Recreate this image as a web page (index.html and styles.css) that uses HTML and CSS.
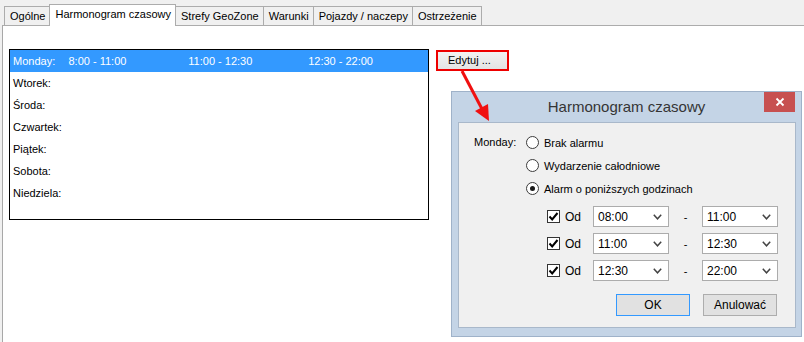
FILE: index.html
```html
<!DOCTYPE html>
<html>
<head lang="pl">
    <meta charset="UTF-8">
    <title>Harmonogram czasowy</title>
    <link rel="stylesheet" href="styles.css">
</head>
<body>

<div class="tabs">
    <div class="tab">Ogólne</div>
    <div class="tab tab-active">Harmonogram czasowy</div>
    <div class="tab">Strefy GeoZone</div>
    <div class="tab">Warunki</div>
    <div class="tab">Pojazdy / naczepy</div>
    <div class="tab">Ostrzeżenie</div>
</div>

<div class="panel">
    <div class="schedule">
        <div class="day day-selected">
            <span class="day-name">Monday:</span>
            <span class="slot">8:00 - 11:00</span>
            <span class="slot">11:00 - 12:30</span>
            <span class="slot">12:30 - 22:00</span>
        </div>
        <div class="day"><span class="day-name">Wtorek:</span></div>
        <div class="day"><span class="day-name">Środa:</span></div>
        <div class="day"><span class="day-name">Czwartek:</span></div>
        <div class="day"><span class="day-name">Piątek:</span></div>
        <div class="day"><span class="day-name">Sobota:</span></div>
        <div class="day"><span class="day-name">Niedziela:</span></div>
    </div>
    <div class="edit-btn">Edytuj ...</div>
</div>

<!-- okno dialogowe nad zakładką -->
<div class="dialog">
    <div class="dialog-title">
        Harmonogram czasowy
        <span class="dialog-close">
            <svg width="10" height="10" viewBox="0 0 10 10">
                <path d="M1.5 1.5 L8.5 8.5 M8.5 1.5 L1.5 8.5" stroke="#fff" stroke-width="1.8" fill="none"/>
            </svg>
        </span>
    </div>
    <div class="dialog-body">
        <div class="dialog-label">Monday:</div>
        <div class="dialog-options">
            <div class="radio-row"><span class="radio"></span>Brak alarmu</div>
            <div class="radio-row"><span class="radio"></span>Wydarzenie całodniowe</div>
            <div class="radio-row"><span class="radio radio-on"></span>Alarm o poniższych godzinach</div>

            <div class="time-row">
                <span class="check"><svg width="11" height="11" viewBox="0 0 11 11"><path d="M1.5 5.5 L4.2 8.5 L9.5 2" stroke="#000" stroke-width="2" fill="none"/></svg></span>
                <span class="od">Od</span>
                <div class="combo">08:00<svg width="9" height="6" viewBox="0 0 9 6"><path d="M0.8 0.8 L4.5 4.8 L8.2 0.8" stroke="#444" stroke-width="1.5" fill="none"/></svg></div>
                <span class="dash">-</span>
                <div class="combo">11:00<svg width="9" height="6" viewBox="0 0 9 6"><path d="M0.8 0.8 L4.5 4.8 L8.2 0.8" stroke="#444" stroke-width="1.5" fill="none"/></svg></div>
            </div>
            <div class="time-row">
                <span class="check"><svg width="11" height="11" viewBox="0 0 11 11"><path d="M1.5 5.5 L4.2 8.5 L9.5 2" stroke="#000" stroke-width="2" fill="none"/></svg></span>
                <span class="od">Od</span>
                <div class="combo">11:00<svg width="9" height="6" viewBox="0 0 9 6"><path d="M0.8 0.8 L4.5 4.8 L8.2 0.8" stroke="#444" stroke-width="1.5" fill="none"/></svg></div>
                <span class="dash">-</span>
                <div class="combo">12:30<svg width="9" height="6" viewBox="0 0 9 6"><path d="M0.8 0.8 L4.5 4.8 L8.2 0.8" stroke="#444" stroke-width="1.5" fill="none"/></svg></div>
            </div>
            <div class="time-row">
                <span class="check"><svg width="11" height="11" viewBox="0 0 11 11"><path d="M1.5 5.5 L4.2 8.5 L9.5 2" stroke="#000" stroke-width="2" fill="none"/></svg></span>
                <span class="od">Od</span>
                <div class="combo">12:30<svg width="9" height="6" viewBox="0 0 9 6"><path d="M0.8 0.8 L4.5 4.8 L8.2 0.8" stroke="#444" stroke-width="1.5" fill="none"/></svg></div>
                <span class="dash">-</span>
                <div class="combo">22:00<svg width="9" height="6" viewBox="0 0 9 6"><path d="M0.8 0.8 L4.5 4.8 L8.2 0.8" stroke="#444" stroke-width="1.5" fill="none"/></svg></div>
            </div>

            <div class="buttons">
                <div class="btn btn-default">OK</div>
                <div class="btn">Anulować</div>
            </div>
        </div>
    </div>
</div>

<!-- czerwona strzałka: przycisk -> okno -->
<svg class="arrow" width="804" height="342" viewBox="0 0 804 342">
    <line x1="462" y1="71" x2="482" y2="109" stroke="#f01010" stroke-width="3"/>
    <polygon points="489,121 475,111 488,104" fill="#f01010"/>
</svg>

</body>
</html>
```

FILE: styles.css
```css
html, body, div, span {
    padding: 0px;
    margin: 0px;
}

body {
    background: #f0f0f0;
    font-family: "Liberation Sans", Arial, sans-serif;
    font-size: 11px;
    color: #000000;
    width: 804px;
    height: 342px;
    overflow: hidden;
}

/* zakładki */
.tabs {
    display: flex;
    align-items: flex-end;
    height: 25px;
    padding-left: 4px;
}

.tab {
    height: 19px;
    line-height: 19px;
    padding: 0px 4px 0px 5px;
    border: #acacac solid 1px;
    border-bottom: none;
    background: #f0f0f0;
    margin-left: -1px;
    box-sizing: border-box;
}

.tab:first-child {
    margin-left: 0px;
}

.tab-active {
    height: 22px;
    line-height: 19px;
    background: #ffffff;
    margin-bottom: -1px;
    position: relative;
    z-index: 1;
}

.panel {
    display: flex;
    align-items: flex-start;
    margin-left: 2px;
    height: 320px;
    background: #ffffff;
    border-top: #acacac solid 1px;
    border-left: #a8a8a8 solid 1px;
    padding: 23px 0px 0px 6px;
    box-sizing: border-box;
}

/* lista dni */
.schedule {
    width: 420px;
    height: 171px;
    border: #000000 solid 1px;
    box-sizing: border-box;
}

.day {
    display: flex;
    height: 22px;
    line-height: 23px;
    padding-left: 3px;
}

.day-selected {
    background: #3399ff;
    color: #ffffff;
}

.day-name {
    width: 56px;
}

.slot {
    width: 121px;
}

.edit-btn {
    margin: 1px 0px 0px 7px;
    width: 73px;
    height: 21px;
    line-height: 17px;
    padding-left: 10px;
    border: #ee0000 solid 2px;
    box-sizing: border-box;
    background: linear-gradient(#f3f3f3, #e3e3e3);
}

/* okno dialogowe */
.dialog {
    position: absolute;
    left: 451px;
    top: 91px;
    width: 351px;
    height: 246px;
    box-sizing: border-box;
    border: #9fb2c9 solid 1px;
    background: #c4d4e6;
    z-index: 5;
}

.dialog-title {
    position: relative;
    height: 30px;
    line-height: 29px;
    text-align: center;
    font-size: 15px;
    color: #353535;
}

.dialog-close {
    position: absolute;
    top: 0px;
    right: 6px;
    width: 31px;
    height: 20px;
    background: #c75050;
    display: flex;
    align-items: center;
    justify-content: center;
}

.dialog-body {
    display: flex;
    height: 206px;
    margin: 0px 5px 0px 6px;
    border: #a9b8ca solid 1px;
    background: #f0f0f0;
    box-sizing: border-box;
    padding: 8px 0px 0px 15px;
}

.dialog-label {
    width: 52px;
    height: 23px;
    line-height: 23px;
}

.dialog-options {
    display: flex;
    flex-direction: column;
}

.radio-row {
    display: flex;
    align-items: center;
    height: 23px;
}

.radio {
    width: 13px;
    height: 13px;
    border: #3c3c3c solid 1px;
    border-radius: 50%;
    background: #ffffff;
    box-sizing: border-box;
    margin-right: 5px;
    display: flex;
    align-items: center;
    justify-content: center;
}

.radio-on::after {
    content: "";
    width: 5px;
    height: 5px;
    border-radius: 50%;
    background: #1a1a1a;
}

.time-row {
    display: flex;
    align-items: center;
    height: 27px;
    padding-left: 21px;
}

.radio-row + .time-row {
    margin-top: 3px;
}

.check {
    width: 13px;
    height: 13px;
    border: #333333 solid 1px;
    background: #ffffff;
    box-sizing: border-box;
    display: flex;
    align-items: center;
    justify-content: center;
}

.od {
    width: 28px;
    padding-left: 5px;
    box-sizing: content-box;
    font-size: 12px;
}

.combo {
    display: flex;
    align-items: center;
    justify-content: space-between;
    width: 76px;
    height: 21px;
    border: #acacac solid 1px;
    background: #ffffff;
    box-sizing: border-box;
    padding: 0px 6px 0px 4px;
    font-size: 12px;
}

.dash {
    width: 33px;
    text-align: center;
}

.buttons {
    display: flex;
    justify-content: flex-end;
    gap: 13px;
    margin-top: 10px;
    padding-right: 1px;
}

.btn {
    width: 74px;
    height: 22px;
    line-height: 20px;
    text-align: center;
    border: #adadad solid 1px;
    background: #e1e1e1;
    box-sizing: border-box;
    font-size: 12px;
}

.btn-default {
    border-color: #3399ff;
}

.arrow {
    position: absolute;
    left: 0px;
    top: 0px;
    z-index: 10;
    pointer-events: none;
}
```
